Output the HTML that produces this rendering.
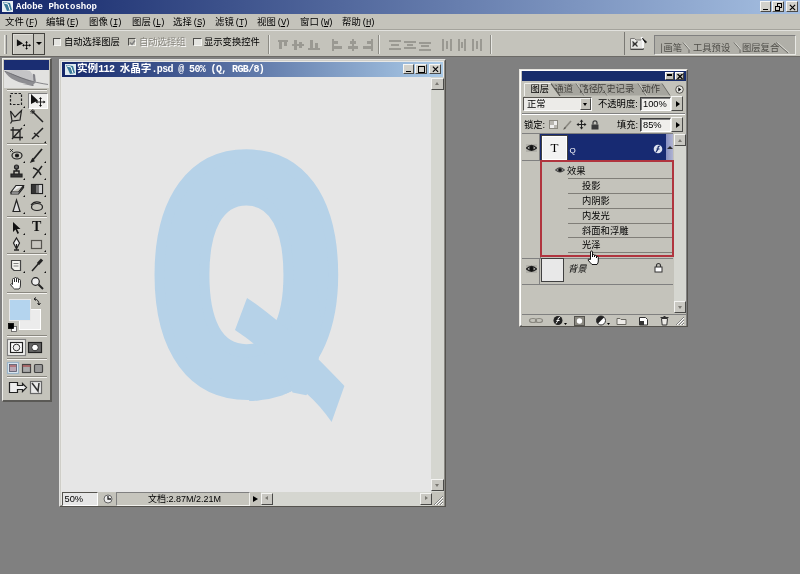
<!DOCTYPE html>
<html lang="zh-CN">
<head>
<meta charset="utf-8">
<title>Adobe Photoshop</title>
<style>
*{box-sizing:border-box;margin:0;padding:0}
html,body{width:800px;height:574px;overflow:hidden;background:#808080}
body{position:relative;font-family:"Liberation Sans","Noto Sans CJK SC","WenQuanYi Zen Hei","Noto Sans CJK JP",sans-serif;font-size:12px;color:#000;line-height:1}
#app{position:absolute;left:0;top:0;width:800px;height:574px;overflow:hidden;background:#808080;filter:blur(.4px)}
.abs{position:absolute}
u{text-decoration:underline}
/* app chrome */
#titlebar{left:0;top:0;width:800px;height:14px;background:linear-gradient(90deg,#14276a,#a5bfe1)}
#titlebar .ttl{left:16px;top:0;height:14px;line-height:14px;color:#fff;font:bold 9px/14px "Liberation Mono","DejaVu Sans Mono",monospace;letter-spacing:0;white-space:nowrap}
#menubar{left:0;top:14px;width:800px;height:17px;background:#c4c3bb}
#menubar>span{position:absolute;top:-1.500px;height:17px;line-height:17px;font-size:9.4px;white-space:nowrap}
#menubar .m{font-family:"Liberation Mono",monospace;font-size:9px;letter-spacing:-1.250px;margin-left:1px}
#optbar{left:0;top:30px;width:800px;height:27px;background:#c4c3bb;border-top:1px solid #e2e2de;border-bottom:1px solid #6c6a66;box-shadow:0 -1px 0 #a4a39c}
.wbtn{top:1px;width:11.500px;height:11px;background:#d2d1cb;border:1px solid;border-color:#f6f6f4 #4a4a48 #4a4a48 #f6f6f4}
.raised{border:1px solid;border-color:#f4f4f2 #4a4a48 #4a4a48 #f4f4f2;background:#c4c3bb}
.sunken{border:solid;border-width:1.500px 1px 1px 1.500px;border-color:#4e4d4a #f4f4f0 #f4f4f0 #4e4d4a;background:#e4e4e0}
.lbl{white-space:nowrap;font-size:9.3px}
.vsep{top:4px;width:2px;height:19px;border-left:1px solid #8c8b84;border-right:1px solid #e6e6e2}
.wtab{top:5.500px;height:13px;font-size:9.3px;line-height:12px;color:#4e4d48;white-space:nowrap}
.dtt{color:#fff;font:bold 10px/14.500px "Liberation Mono","Noto Sans CJK SC",monospace;letter-spacing:-.63px;white-space:nowrap}
.dtt .cj{font-size:10.6px;letter-spacing:0;font-family:"Liberation Mono","Noto Sans CJK SC",monospace}
.sbtrack{background:#d5d6d0}
.sbb{width:12px;height:12px;background:#c9c8c2}
.tri{position:absolute;left:3px;top:3px;width:0;height:0;border:2.5px solid transparent}
.tri.up{border-bottom:3px solid #7a7872;border-top:0;left:2.5px;top:3.5px}
.tri.dn{border-top:3px solid #7a7872;border-bottom:0;left:2.5px;top:4px}
.tri.lf{border-right:3px solid #7a7872;border-left:0;left:3px;top:2.5px}
.tri.rt{border-left:3px solid #7a7872;border-right:0;left:4px;top:2.5px}
.pbtn{width:9px;height:7.500px;background:#c4c3bb;border:1px solid;border-color:#fff #404040 #404040 #fff}
.ptab{top:1.500px;margin-left:-.5px;font-size:9.3px;line-height:12px;color:#44423e;white-space:nowrap}
.pin{width:31px;height:14px;background:#f0efec;border:1px solid;border-color:#404040 #fff #fff #404040;box-shadow:inset 1px 1px 0 #808080;font-size:9.3px;line-height:12px;padding-left:2px}
.eln{left:46px;width:105px;height:1px;background:#807e78}
.tsep{left:4px;width:40px;height:2px;border-top:1px solid #8a8880;border-bottom:1px solid #f4f3f0}
</style>
</head>
<body>
<div id="app">
<!-- TITLE BAR -->
<div id="titlebar" class="abs">
  <svg class="abs" style="left:2px;top:1px" width="11" height="11" viewBox="0 0 11 11"><rect width="11" height="11" fill="#e8f0f4"/><path d="M1 1 L8 2 L10 9 L5 10 Z" fill="#3a7a9a"/><path d="M2 2 L6 3 L8 9" stroke="#fff" stroke-width="1" fill="none"/></svg>
  <div class="abs ttl">Adobe Photoshop</div>
  <div class="abs wbtn" style="left:759.500px"><div class="abs" style="left:2.500px;top:6.500px;width:5px;height:1.500px;background:#000"></div></div>
  <div class="abs wbtn" style="left:772px"><div class="abs" style="left:3.500px;top:1px;width:5px;height:5px;border:1px solid #000;border-top-width:1.500px"></div><div class="abs" style="left:1.500px;top:3.500px;width:5px;height:5px;border:1px solid #000;border-top-width:1.500px;background:#d2d1cb"></div></div>
  <div class="abs wbtn" style="left:786px"><svg class="abs" style="left:1.500px;top:1.500px" width="7" height="7" viewBox="0 0 8 7"><path d="M1 0.5 L7 6.5 M7 0.5 L1 6.5" stroke="#000" stroke-width="1.300"/></svg></div>
</div>
<!-- MENU BAR -->
<div id="menubar" class="abs">
  <span style="left:5px">文件<span class="m">(<u>F</u>)</span></span>
  <span style="left:46px">编辑<span class="m">(<u>E</u>)</span></span>
  <span style="left:89px">图像<span class="m">(<u>I</u>)</span></span>
  <span style="left:132px">图层<span class="m">(<u>L</u>)</span></span>
  <span style="left:173px">选择<span class="m">(<u>S</u>)</span></span>
  <span style="left:215px">滤镜<span class="m">(<u>T</u>)</span></span>
  <span style="left:257px">视图<span class="m">(<u>V</u>)</span></span>
  <span style="left:300px">窗口<span class="m">(<u>W</u>)</span></span>
  <span style="left:342px">帮助<span class="m">(<u>H</u>)</span></span>
</div>
<!-- OPTIONS BAR -->
<div id="optbar" class="abs">
  <div class="abs" style="left:4px;top:4px;width:3px;height:19px;border-left:1px solid #ecece8;border-right:1px solid #808080"></div>
  <div class="abs" style="left:12px;top:1.500px;width:22px;height:22px;border:1px solid #44433f;background:#c9c8c1;box-shadow:inset 1px 1px 0 #dddcd6">
    <svg class="abs" style="left:3px;top:4px" width="15" height="12" viewBox="0 0 17 13"><path d="M1 1 L1 9 L8 6 Z" fill="#111"/><path d="M12 4 V12 M8 8 H16" stroke="#000" stroke-width="1"/><path d="M12 3 l-1.5 2 h3z M12 13 l-1.5 -2 h3z M7 8 l2 -1.5 v3z M17 8 l-2 -1.5 v3z" fill="#000"/></svg>
  </div>
  <div class="abs" style="left:33px;top:1.500px;width:11.500px;height:22px;border:1px solid #44433f;background:#c4c3bb">
    <div class="abs" style="left:2px;top:8px;width:0;height:0;border:3px solid transparent;border-top:3px solid #000;border-bottom:0"></div>
  </div>
  <div class="abs sunken" style="left:52.500px;top:6.500px;width:8.500px;height:8.500px"></div>
  <div class="abs lbl" style="left:64px;top:5px;line-height:12px">自动选择图层</div>
  <div class="abs sunken" style="left:127.500px;top:6.500px;width:8.500px;height:8.500px;background:#c4c3bb"><svg class="abs" style="left:0;top:0" width="7" height="7" viewBox="0 0 7 7"><path d="M1 3.5 L3 5.5 L6 1.5" stroke="#808080" stroke-width="1.4" fill="none"/></svg></div>
  <div class="abs lbl" style="left:139px;top:5px;line-height:12px;color:#8a8880;text-shadow:1px 1px 0 #fff">自动选择组</div>
  <div class="abs sunken" style="left:193px;top:6.500px;width:8.500px;height:8.500px"></div>
  <div class="abs lbl" style="left:204px;top:5px;line-height:12px">显示变换控件</div>
  <div class="abs vsep" style="left:268px"></div>
  <div class="abs vsep" style="left:378px"></div>
  <div class="abs vsep" style="left:490px"></div>
  <svg class="abs" style="left:276px;top:7px;filter:drop-shadow(.8px .8px 0 #e4e4e0)" width="210" height="14" viewBox="0 0 210 14" fill="#9a9992" stroke="none">
    <g id="ic"><rect x="2" y="2" width="10" height="2"/><rect x="3" y="4" width="3" height="7"/><rect x="8" y="4" width="3" height="4"/></g>
    <g transform="translate(15,0)"><rect x="1" y="6" width="12" height="2"/><rect x="3" y="2" width="3" height="10"/><rect x="8" y="4" width="3" height="6"/></g>
    <g transform="translate(31,0)"><rect x="1" y="10" width="12" height="2"/><rect x="3" y="2" width="3" height="8"/><rect x="8" y="5" width="3" height="5"/></g>
    <g transform="translate(54,0)"><rect x="2" y="1" width="2" height="12"/><rect x="4" y="3" width="4" height="3"/><rect x="4" y="8" width="8" height="3"/></g>
    <g transform="translate(70,0)"><rect x="6" y="1" width="2" height="12"/><rect x="4" y="3" width="6" height="3"/><rect x="2" y="8" width="10" height="3"/></g>
    <g transform="translate(85,0)"><rect x="10" y="1" width="2" height="12"/><rect x="6" y="3" width="4" height="3"/><rect x="2" y="8" width="8" height="3"/></g>
    <g transform="translate(112,0)"><rect x="1" y="2" width="12" height="2"/><rect x="3" y="6" width="8" height="2"/><rect x="1" y="10" width="12" height="2"/></g>
    <g transform="translate(127,0)"><rect x="1" y="3" width="12" height="2"/><rect x="4" y="6" width="6" height="2"/><rect x="1" y="9" width="12" height="2"/></g>
    <g transform="translate(142,0)"><rect x="1" y="4" width="12" height="2"/><rect x="3" y="7" width="8" height="2"/><rect x="1" y="11" width="12" height="2"/></g>
    <g transform="translate(164,0)"><rect x="2" y="1" width="2" height="12"/><rect x="6" y="3" width="2" height="8"/><rect x="10" y="1" width="2" height="12"/></g>
    <g transform="translate(179,0)"><rect x="3" y="1" width="2" height="12"/><rect x="6" y="4" width="2" height="6"/><rect x="9" y="1" width="2" height="12"/></g>
    <g transform="translate(194,0)"><rect x="2" y="1" width="2" height="12"/><rect x="6" y="3" width="2" height="8"/><rect x="10" y="1" width="2" height="12"/></g>
  </svg>
  <div class="abs" style="left:623.500px;top:1px;width:1px;height:23px;background:#7a7974"></div>
  <svg class="abs" style="left:629px;top:4px" width="19" height="17" viewBox="0 0 19 17"><path d="M1.5 3.5 h4 l1.500 1.500 h5 l1.500 -1.500 h1 v10.500 h-13z" fill="#e6e6e4" stroke="#7a7976" stroke-width="1"/><path d="M3.500 6.500 l5 5 M8.500 6.500 l-5 5 M3.500 9 h4" stroke="#333" stroke-width="1.200"/><path d="M12.500 2 l1.500 4 v7" stroke="#f8f8f8" stroke-width="2" fill="none"/><path d="M13.500 3.500 l4 3.500 l-1 .8z" fill="#111" stroke="#111" stroke-width="1"/><path d="M1.500 14.500 h13" stroke="#444" stroke-width="1"/></svg>
  <div class="abs" style="left:654px;top:4px;width:142px;height:20px;background:#b0afa8;border:1px solid;border-color:#808080 #e8e8e4 #e8e8e4 #808080">
    <svg class="abs" style="left:0;top:0" width="140" height="18" viewBox="0 0 140 18"><path d="M6.500 17 V7.500 M28 6.500 L34 13.500 V17 M79 6.500 L85 13.500 V17 M121 6.500 L133 17" stroke="#6a6964" stroke-width="1" fill="none"/><path d="M29 6.500 L35 13.500 M80 6.500 L86 13.500 M122.500 6.500 L134.500 17" stroke="#d8d8d2" stroke-width="1" fill="none"/></svg>
    <div class="abs wtab" style="left:8.500px">画笔</div>
    <div class="abs wtab" style="left:38px">工具预设</div>
    <div class="abs wtab" style="left:87px">图层复合</div>
  </div>
</div>

<!-- DOCUMENT WINDOW -->
<div id="doc" class="abs" style="left:59px;top:59px;width:387px;height:448px;background:#e8e8e6;border:1px solid;border-color:#e2e2e0 #55534e #55534e #e2e2e0">
  <div class="abs" style="left:0;top:0;width:385px;height:446px;border:1px solid;border-color:#cfcec8 #8a8984 #8a8984 #cfcec8"></div>
  <div class="abs" id="doctitle" style="left:2px;top:2px;width:381px;height:15px;background:linear-gradient(90deg,#14276a,#abcbe8)">
    <svg class="abs" style="left:3px;top:2px" width="11" height="11" viewBox="0 0 11 11"><rect width="11" height="11" fill="#dfeaf0"/><path d="M1 1 L8 2 L10 9 L5 10 Z" fill="#3a7a9a"/><path d="M2 2 L6 3 L8 9" stroke="#fff" stroke-width="1" fill="none"/></svg>
    <div class="abs dtt" style="left:15px;top:0"><span class="cj">实例</span>112 <span class="cj">水晶字</span>.psd @ 50% (Q, RGB/8)</div>
    <div class="abs wbtn" style="left:340.500px;top:2px;height:10px"><div class="abs" style="left:2.500px;top:5.500px;width:5px;height:1.500px;background:#000"></div></div>
    <div class="abs wbtn" style="left:353px;top:2px;height:10px"><div class="abs" style="left:1.500px;top:1px;width:7px;height:6.500px;border:1px solid #000;border-top-width:1.500px"></div></div>
    <div class="abs wbtn" style="left:367px;top:2px;height:10px"><svg class="abs" style="left:1.500px;top:1px" width="7" height="6.5" viewBox="0 0 8 7"><path d="M1 0.5 L7 6.5 M7 0.5 L1 6.5" stroke="#000" stroke-width="1.300"/></svg></div>
  </div>
  <!-- canvas -->
  <div class="abs" id="canvas" style="left:2px;top:17px;width:369px;height:415px;background:#e6e6e6;overflow:hidden">
    <svg class="abs" style="left:0;top:0" width="370" height="415" viewBox="61 76 370 415" fill="#b6d2e8" stroke="#b6d2e8">
      <clipPath id="cb"><polygon points="61,76 431,76 431,383 301,383 291,390 281,394.5 268,398 252,400 61,400"/></clipPath>
      <clipPath id="ct"><polygon points="240,290 279,318 279,284 336.5,284 336.5,371 360,371 360,440 331.5,423 306.5,394.5 291.5,391.5 284.5,372 256,347 228,330"/></clipPath>
      <g clip-path="url(#cb)"><text transform="matrix(0.11318 0 0 0.15347 146.9 388.2)" font-family="'DejaVu Sans','Liberation Sans',sans-serif" font-weight="bold" font-size="2048" stroke-width="87">Q</text></g>
      <g clip-path="url(#ct)"><text transform="matrix(0.17439 -0.12939 0.09666 0.23446 203.06 499.31)" font-family="IPAGothic,'DejaVu Sans',sans-serif" font-size="2048" stroke="none">Q</text></g>
    </svg>
  </div>
  <!-- v scrollbar -->
  <div class="abs sbtrack" style="left:371px;top:17px;width:13px;height:415px">
    <div class="abs raised sbb" style="left:0;top:.5px;width:12.500px"><i class="tri up"></i></div>
    <div class="abs raised sbb" style="left:0;bottom:1px;width:12.500px"><i class="tri dn"></i></div>
  </div>
  <!-- status bar -->
  <div class="abs" style="left:2px;top:432px;width:382px;height:14px;background:#c4c3bb">
    <div class="abs" style="left:0;top:0;width:36px;height:14px;background:#e6e6e6;border:1px solid;border-color:#55534e #fff #fff #55534e;font-size:9.3px;line-height:12.500px;padding-left:1.500px">50%</div>
    <svg class="abs" style="left:41px;top:2px" width="10" height="10" viewBox="0 0 10 10"><circle cx="5" cy="5" r="4" fill="#eee" stroke="#666"/><path d="M5 2 V5 H8" stroke="#222" stroke-width="1.3" fill="none"/></svg>
    <div class="abs" style="left:54px;top:0;width:134px;height:14px;background:#c6c5bd;border:1px solid;border-color:#808080 #f0f0ec #f0f0ec #808080;font-size:9px;line-height:12.500px;padding-left:31px;white-space:nowrap">文档:2.87M/2.21M</div>
    <div class="abs" style="left:191px;top:3.500px;width:0;height:0;border:3.5px solid transparent;border-left:5px solid #000;border-right:0"></div>
    <div class="abs sbtrack" style="left:198.500px;top:0;width:171.500px;height:14px">
      <div class="abs raised sbb" style="left:0;top:.5px;height:12.500px"><i class="tri lf"></i></div>
      <div class="abs raised sbb" style="right:0;top:.5px;height:12.500px"><i class="tri rt"></i></div>
    </div>
    <svg class="abs" style="left:370px;top:1px" width="12" height="13" viewBox="0 0 12 13"><path d="M11 3 L2 12 M11 6 L5 12 M11 9 L8 12" stroke="#808080" stroke-width="1"/><path d="M11 4 L3 12 M11 7 L6 12 M11 10 L9 12" stroke="#fff" stroke-width="1"/></svg>
  </div>
</div>

<!-- LAYERS PALETTE -->
<div id="layers" class="abs" style="left:519px;top:69px;width:169px;height:258px;background:#c4c3bb;border:1px solid;border-color:#e8e6e0 #55534e #55534e #e8e6e0">
  <div class="abs" style="left:0;top:0;width:167px;height:256px;border:1px solid;border-color:#fff #808080 #808080 #fff"></div>
  <div class="abs" style="left:1.500px;top:1px;width:164.500px;height:10px;background:#182d6c">
    <div class="abs pbtn" style="left:143.500px;top:1px"><div class="abs" style="left:1px;top:1px;width:5px;height:2px;background:#000"></div></div>
    <div class="abs pbtn" style="left:153px;top:1px"><svg class="abs" style="left:1px;top:1px" width="6" height="5" viewBox="0 0 6 5"><path d="M0.5 0 L5.5 5 M5.5 0 L0.5 5" stroke="#000" stroke-width="1.3"/></svg></div>
  </div>
  <!-- tabs -->
  <div class="abs" style="left:2px;top:11px;width:164px;height:15px;background:#c4c3bb;overflow:hidden">
    <svg class="abs" style="left:0;top:0" width="164" height="15" viewBox="0 0 164 15">
      <path d="M29 14.500 V2.500 H140 L148 14.500 Z" fill="#a6a59e"/>
      <path d="M54 2.500 L62 14.500 M77 2.500 L85 14.500 M116 2.500 L124 14.500 M140 2.500 L148 14.500" stroke="#6e6d68" stroke-width="1" fill="none"/>
      <path d="M55 2.500 L63 14.500 M78 2.500 L86 14.500 M117 2.500 L125 14.500" stroke="#d0cfc8" stroke-width="1" fill="none"/>
    </svg>
    <div class="abs ptab" style="left:33px">通道</div>
    <div class="abs ptab" style="left:58px">路径</div>
    <div class="abs ptab" style="left:75.500px">历史记录</div>
    <div class="abs ptab" style="left:120px">动作</div>
    <svg class="abs" style="left:0;top:0" width="164" height="15" viewBox="0 0 164 15">
      <path d="M2.500 15 V2.500 H29 L38 15 Z" fill="#c4c3bb"/>
      <path d="M2.500 15 V2.500 H29" stroke="#f0f0ec" stroke-width="1" fill="none"/>
      <path d="M29 2.500 L38 15" stroke="#55534e" stroke-width="1.200" fill="none"/>
      <path d="M62.500 14.500 L57 6 L62 6 Z M85.500 14.500 L80 6 L86 6Z" fill="#a6a59e"/>
      <circle cx="157.500" cy="8.500" r="3.800" fill="#e4e4e0" stroke="#55534e" stroke-width="1"/>
      <path d="M156.300 6.500 L159.300 8.500 L156.300 10.500 Z" fill="#000"/>
    </svg>
    <div class="abs ptab" style="left:9px;color:#000">图层</div>
  </div>
  <!-- blend row -->
  <div class="abs" style="left:3px;top:27px;width:69px;height:14px;background:#ecebe8;border:1px solid;border-color:#55534e #fff #fff #55534e;font-size:9.3px;line-height:12px;padding-left:3px">正常
    <div class="abs raised" style="right:0;top:0;width:11px;height:12px"><div class="abs" style="left:2px;top:4px;width:0;height:0;border:2.5px solid transparent;border-top:3px solid #000;border-bottom:0"></div></div>
  </div>
  <div class="abs lbl" style="left:78px;top:28px;line-height:12px">不透明度:</div>
  <div class="abs pin" style="left:120px;top:27px">100%</div>
  <div class="abs raised" style="left:150.500px;top:26px;width:12.500px;height:15px"><div class="abs" style="left:4px;top:3.500px;width:0;height:0;border:3px solid transparent;border-left:4px solid #000;border-right:0"></div></div>
  <div class="abs" style="left:2px;top:43px;width:163px;height:2px;border-top:1px solid #808080;border-bottom:1px solid #fff"></div>
  <!-- lock row -->
  <div class="abs lbl" style="left:4px;top:49px;line-height:12px">锁定:</div>
  <svg class="abs" style="left:28px;top:48px" width="54" height="13" viewBox="0 0 54 13">
    <rect x="1.5" y="2.5" width="8" height="8" fill="#eee" stroke="#8a8880"/><path d="M2 3h4v4h-4z M6 7h3v3h-3z" fill="#b8b6b0"/>
    <path d="M16 11 L23 3" stroke="#8a8880" stroke-width="1.6"/><path d="M15 12 l2 -3 l1 1z" fill="#55534e"/>
    <path d="M33.5 2.5 V10.5 M29.5 6.5 H37.5" stroke="#222" stroke-width="1"/><path d="M33.5 1.5 l-1.800 2.200 h3.600z M33.5 11.5 l-1.800 -2.200 h3.600z M28.5 6.5 l2.200 -1.800 v3.600z M38.5 6.5 l-2.200 -1.800 v3.600z" fill="#222"/>
    <rect x="43.5" y="6.5" width="7" height="5" fill="#3a3a3a"/><path d="M45 6.5 V4.800 a2 2 0 0 1 4 0 V6.5" stroke="#3a3a3a" stroke-width="1.200" fill="none"/>
  </svg>
  <div class="abs lbl" style="left:97px;top:49px;line-height:12px">填充:</div>
  <div class="abs pin" style="left:120px;top:48px">85%</div>
  <div class="abs raised" style="left:150.500px;top:47px;width:12.500px;height:15px"><div class="abs" style="left:4px;top:3.500px;width:0;height:0;border:3px solid transparent;border-left:4px solid #000;border-right:0"></div></div>
  <!-- layer list -->
  <div class="abs" id="llist" style="left:2px;top:62.500px;width:151px;height:181px;background:#c4c3bb;border-top:1px solid #808080">
    <!-- Q layer -->
    <div class="abs" style="left:0;top:0;width:18px;height:27px;border-right:1px solid #808080;border-bottom:1px solid #808080"></div>
    <div class="abs" style="left:18px;top:0;width:133px;height:27px;background:#172a72"></div>
    <div class="abs" style="left:143.500px;top:0;width:7.500px;height:27px;background:linear-gradient(90deg,#8890c0,#b0b4d2)"></div>
    <div class="abs" style="left:19px;top:1px;width:27px;height:26px;background:#f2f2f2;border:1px solid #404040;box-shadow:inset 0 0 0 1px #fff;font:13px/23px 'Liberation Serif',serif;text-align:center;color:#000">T</div>
    <div class="abs" style="left:47.500px;top:12px;font:8px/10px 'Liberation Sans',sans-serif;color:#fff">Q</div>
    <svg class="abs" style="left:131px;top:10px" width="10" height="10" viewBox="0 0 10 10"><circle cx="5" cy="5" r="4.3" fill="#dfe3f0"/><path d="M3 8 Q5 6 5 4 Q5 2 7 2 M3.5 5 H6.5" stroke="#172b69" stroke-width="1.2" fill="none"/></svg>
    <div class="abs" style="left:144.500px;top:12px;width:0;height:0;border:3px solid transparent;border-bottom:3.500px solid #2a2a30;border-top:0"></div>
    <svg class="abs eye" style="left:4px;top:10px" width="11" height="8" viewBox="0 0 11 8"><rect x="-1" y="-1" width="13" height="10" fill="#b2b1aa"/><path d="M0.500 4 Q5.500 -1 10.500 4 Q5.500 8.500 0.500 4Z" fill="#e0e0dc" stroke="#222" stroke-width="1.300"/><circle cx="5.500" cy="4" r="2.300" fill="#111"/></svg>
    <!-- effects -->
    <svg class="abs eye" style="left:33px;top:32px" width="10" height="8" viewBox="0 0 11 8"><path d="M0.500 4 Q5.500 -1 10.500 4 Q5.500 8.500 0.500 4Z" fill="#888" stroke="#333" stroke-width="1"/><circle cx="5.500" cy="4" r="2" fill="#111"/></svg>
    <div class="abs lbl" style="left:45px;top:31px;line-height:12px">效果</div>
    <div class="abs lbl" style="left:60px;top:46px;line-height:12px">投影</div>
    <div class="abs lbl" style="left:60px;top:61px;line-height:12px">内阴影</div>
    <div class="abs lbl" style="left:60px;top:76px;line-height:12px">内发光</div>
    <div class="abs lbl" style="left:60px;top:91px;line-height:12px">斜面和浮雕</div>
    <div class="abs lbl" style="left:60px;top:105px;line-height:12px">光泽</div>
    <div class="abs eln" style="top:44.3px"></div>
    <div class="abs eln" style="top:59.3px"></div>
    <div class="abs eln" style="top:74.3px"></div>
    <div class="abs eln" style="top:89.3px"></div>
    <div class="abs eln" style="top:103.3px"></div>
    <div class="abs eln" style="top:118.3px"></div>
    <div class="abs" style="left:18px;top:27px;width:1px;height:98px;background:#808080"></div>
    <div class="abs" style="left:0;top:124px;width:151px;height:1px;background:#808080"></div>
    <!-- red highlight -->
    <div class="abs" style="left:17.900px;top:26.800px;width:134.500px;height:97px;border:2px solid #b0343e;z-index:3"></div>
    <!-- background layer -->
    <div class="abs" style="left:0;top:124px;width:18px;height:27px;border-right:1px solid #808080"></div>
    <svg class="abs eye" style="left:4px;top:131px" width="11" height="8" viewBox="0 0 11 8"><rect x="-1" y="-1" width="13" height="10" fill="#b2b1aa"/><path d="M0.500 4 Q5.500 -1 10.500 4 Q5.500 8.500 0.500 4Z" fill="#e0e0dc" stroke="#222" stroke-width="1.300"/><circle cx="5.500" cy="4" r="2.300" fill="#111"/></svg>
    <div class="abs" style="left:19px;top:124px;width:23px;height:24px;background:#e8e8e8;border:1px solid #404040"></div>
    <div class="abs lbl" style="left:46px;top:129.500px;line-height:12px;font-style:italic">背景</div>
    <svg class="abs" style="left:132px;top:128.500px" width="9" height="11" viewBox="0 0 9 11"><rect x="1" y="5" width="7" height="5" fill="#fff" stroke="#333"/><path d="M2.500 5 V3.500 a2 2 0 0 1 4 0 V5" stroke="#333" stroke-width="1.200" fill="none"/></svg>
    <div class="abs" style="left:0;top:150.500px;width:151px;height:1px;background:#808080"></div>
    <!-- cursor hand -->
    <svg class="abs" style="left:65px;top:116.500px;z-index:5" width="12" height="16" viewBox="0 0 12 16"><path d="M3.500 8 V2 a1 1 0 0 1 2 0 V7 V5.500 a1 1 0 0 1 2 0 V7 V6.300 a1 1 0 0 1 2 0 V8 V7.300 a0.900 0.900 0 0 1 1.800 0 V11 Q11.300 13 10 14.500 H5 Q3 12.500 1 10 Q0.800 8.500 3.500 9.500Z" fill="#fff" stroke="#000" stroke-width="0.900"/></svg>
  </div>
  <!-- scrollbar -->
  <div class="abs sbtrack" style="left:154px;top:64px;width:12px;height:179px">
    <div class="abs raised sbb" style="left:0;top:0;width:12px;height:12px"><i class="tri up" style="left:2.500px;top:3.500px"></i></div>
    <div class="abs raised sbb" style="left:0;bottom:0;width:12px;height:12px"><i class="tri dn" style="left:2.500px;top:4px"></i></div>
  </div>
  <!-- bottom bar -->
  <div class="abs" style="left:2px;top:244px;width:164px;height:12px;background:#c4c3bb;border-top:1px solid #808080">
    <svg class="abs" style="left:-1.500px;top:0" width="164" height="11" viewBox="0 0 164 11">
      <g fill="none" stroke="#8a8880" stroke-width="1.200"><ellipse cx="12" cy="5.500" rx="3.500" ry="2"/><ellipse cx="18" cy="5.500" rx="3.500" ry="2"/></g>
      <circle cx="37" cy="5.500" r="4.500" fill="#222"/><path d="M35 8.500 Q37 6 37 4.500 Q37 2.500 39 2.500 M35.500 5.500 H38.500" stroke="#fff" stroke-width="1" fill="none"/>
      <path d="M43 8 h3 l-1.500 2z" fill="#000"/>
      <rect x="53.500" y="1.500" width="10" height="9" fill="#8a8880" stroke="#55534e"/><circle cx="58.500" cy="6" r="2.700" fill="#fff"/>
      <circle cx="80" cy="5.500" r="4.500" fill="#fff" stroke="#333"/><path d="M76.800 8.700 A4.500 4.500 0 0 1 83.200 2.300 Z" fill="#222"/>
      <path d="M86 8 h3 l-1.500 2z" fill="#000"/>
      <path d="M96 3.500 h3 l1 1 h5 v5 h-9z" fill="#eceae6" stroke="#6a6862"/>
      <path d="M118.500 2.500 h6 l2 2 v5.500 h-8z" fill="#fff" stroke="#333"/><rect x="119" y="6" width="4" height="4" fill="#333"/>
      <path d="M140.500 3.500 h6 l-0.700 6.500 h-4.600z" fill="#eceae6" stroke="#333"/><path d="M139.500 2.500 h8 M142.500 1.500 h2" stroke="#333"/>
      <path d="M163 2 L155 10 M163 5 L158 10 M163 8 L161 10" stroke="#808080"/><path d="M163 3 L156 10 M163 6 L159 10 M163 9 L162 10" stroke="#fff"/>
    </svg>
  </div>
</div>

<!-- TOOLBOX -->
<div id="toolbox" class="abs" style="left:2px;top:58px;width:50px;height:344px;background:#c4c3bb;border:solid;border-width:1px 2px 2px 1px;border-color:#f0f0ec #5a5955 #5a5955 #f0f0ec">
  <div class="abs" style="left:1px;top:1px;width:45px;height:10px;background:#1a2d72"></div>
  <div class="abs" style="left:1px;top:11px;width:45px;height:18px;background:#e2e2e0;overflow:hidden">
    <svg class="abs" style="left:0;top:0" width="45" height="18" viewBox="53 187 600 240" preserveAspectRatio="none">
      <path d="M60 200 C 200 178 350 186 400 200 C 440 250 462 300 472 352 C 330 315 190 255 60 200 Z" fill="#c4c4c6"/>
      <path d="M60 205 C 110 300 250 372 440 388 L 472 352 C 330 312 200 252 60 205 Z" fill="#8e8e92"/>
      <path d="M438 236 L 446 330 L 478 345 L 466 246 Z" fill="#808086"/>
      <path d="M60 203 C 200 250 330 335 640 380" stroke="#58585e" stroke-width="9" fill="none"/>
      <path d="M300 375 L 450 400 L 440 385 Z" fill="#6a6a70"/>
    </svg>
  </div>
  <div class="abs tsep" style="top:29.500px"></div>
  <!-- selected move tool bg -->
  <div class="abs" style="left:25px;top:34px;width:20px;height:16px;background:#f0f0ee;border:1px solid;border-color:#808080 #fff #fff #808080"></div>
  <svg class="abs" style="left:0;top:0" width="47" height="341" viewBox="3 59 47 341" fill="none" stroke="#222" stroke-width="1.200">
    <!-- row1 marquee / move -->
    <rect x="10.500" y="93.500" width="11" height="11" stroke-dasharray="2.500 1.500"/>
    <path d="M31 94 V104 L38 100.500Z" fill="#111" stroke="none"/><path d="M40.500 98 V106 M36.500 102 H44.500" stroke-width="1"/><path d="M40.500 97 l-1.500 2 h3z M40.500 107 l-1.500 -2 h3z M35.500 102 l2 -1.500 v3z M45.500 102 l-2 -1.500 v3z" fill="#111" stroke="none"/>
    <!-- row2 lasso / wand -->
    <path d="M10.500 111 L15 117 L21.500 110.500 L20 120 L12 121 Z M12 121 L10.500 123.500"/>
    <path d="M33 112 L43 122" stroke-width="1.500"/><path d="M31 110 l3.500 3.500 M34.500 110 l-3.500 3.500 M32.800 109 v5 M30 111.700 h5" stroke-width="0.800"/>
    <!-- row3 crop / slice -->
    <path d="M13 127 V137.500 H23 M10.500 130 H20 V140.500 M12 139 L22 128" stroke-width="1.300"/>
    <path d="M32 139 L43 128 M34 133 l5 4" stroke-width="1.500"/>
    <!-- row4 heal / brush -->
    <ellipse cx="17" cy="155.500" rx="5" ry="3.500"/><circle cx="17" cy="155.500" r="1.500" fill="#111"/><path d="M10 149 l3 3 M13 149 l-3 3" stroke-width="0.800"/>
    <path d="M32 161 L42 149" stroke-width="1.800"/><path d="M31 162 l3 -1 l-1.500 -2z" fill="#111"/>
    <!-- row5 stamp / history brush -->
    <path d="M11 177 H22 V174 H11 Z" fill="#333"/><path d="M14 174 V171 H19 V174 M16.500 171 V168" stroke-width="1.500"/><circle cx="16.500" cy="167" r="2" fill="#666"/>
    <path d="M33 178 L42 166 M33 168 q5 1 8 7" stroke-width="1.500"/>
    <!-- row6 eraser / gradient -->
    <path d="M11 192 L16 185.500 H23.500 L18.500 192 Z M11 192 v2 h7.500 l5 -6.500 v-2" fill="#eee"/>
    <rect x="31.500" y="184.500" width="11" height="9" fill="#777"/><rect x="32" y="185" width="4" height="8" fill="#333" stroke="none"/><rect x="39" y="185" width="3" height="8" fill="#ccc" stroke="none"/>
    <!-- row7 blur / dodge -->
    <path d="M16.500 200 L20 211.500 H13 Z" fill="#ddd"/>
    <ellipse cx="37" cy="207" rx="5.500" ry="3.500"/><path d="M31 205 q4 -5 10 -2" />
    <!-- row8 path select / type -->
    <path d="M13 222 V232 L15.500 229.500 L17.500 234 L19 233 L17 229 H20.500 Z" fill="#111" stroke="none"/>
    <!-- row9 pen / shape -->
    <path d="M16.500 238 l3 5 l-3 6 l-3 -6z M16.500 244 v5" fill="#eee"/><path d="M14 250 h5" stroke-width="1.500"/>
    <rect x="31.500" y="240.500" width="10" height="8" fill="#c8c6c0" stroke="#55534e"/>
    <!-- row10 notes / eyedropper -->
    <path d="M11.500 260.500 H20.500 V270.500 H14 L11.500 268 Z" fill="#f4f4f0" stroke="#444"/><path d="M13.500 263.500 h5 M13.500 266 h5" stroke-width="0.800" stroke="#666"/>
    <path d="M32 271 L39 263" stroke-width="1.500"/><path d="M38 264 L42 259.500" stroke-width="3"/>
    <!-- row11 hand / zoom -->
    <path d="M12.500 283 V279.500 a1 1 0 0 1 2 0 V282 V278.500 a1 1 0 0 1 2 0 V282 V279 a1 1 0 0 1 2 0 V282.500 V280.500 a1 1 0 0 1 2 0 V285 Q20.500 288 19 289 H14.500 Q12 287 10.500 284.500 Q11 283 12.500 284.500Z" fill="#fff" stroke="#222" stroke-width="0.900"/>
    <circle cx="35.500" cy="281.500" r="3.800" fill="#eee"/><path d="M38.500 284.500 L43 289" stroke-width="2"/>
    <!-- submenu arrows -->
    <g fill="#111" stroke="none">
      <path d="M25 108 l0 -2 l-2 2z M25 126 l0 -2 l-2 2z M46 143 l0 -2 l-2 2z M25 163 l0 -2 l-2 2z M46 163 l0 -2 l-2 2z M25 180 l0 -2 l-2 2z M46 180 l0 -2 l-2 2z M25 197 l0 -2 l-2 2z M46 197 l0 -2 l-2 2z M25 214 l0 -2 l-2 2z M46 214 l0 -2 l-2 2z M25 235 l0 -2 l-2 2z M46 235 l0 -2 l-2 2z M25 252 l0 -2 l-2 2z M46 252 l0 -2 l-2 2z M25 273 l0 -2 l-2 2z M46 273 l0 -2 l-2 2z"/>
    </g>
    <!-- colour swatches -->
    <rect x="19.500" y="309.500" width="21" height="20" fill="#ececec" stroke="#fff" stroke-width="1"/>
    <rect x="9.500" y="299.500" width="21" height="21" fill="#b4d4ee" stroke="#e8e8e8" stroke-width="1"/>
    <rect x="11.500" y="326.500" width="5" height="5" fill="#fff" stroke="#555" stroke-width="0.800"/><rect x="8.500" y="323.500" width="5" height="5" fill="#000" stroke="#000" stroke-width="0.800"/>
    <path d="M34 299 q5 0 5 6 M34 299 l2 -1.500 M34 299 l2 1.500 M39 305 l-1.500 -2 M39 305 l1.500 -2" stroke-width="1"/>
    <!-- quick mask -->
    <rect x="7.500" y="339.500" width="18" height="16" fill="#f4f4f2" stroke="#808080"/>
    <rect x="10.500" y="342.500" width="12" height="10" fill="#fff" stroke="#222"/><circle cx="16.500" cy="347.500" r="3.300" fill="#eee" stroke="#222" stroke-width="0.900"/>
    <rect x="28.500" y="342.500" width="13" height="10" fill="#666" stroke="#222"/><circle cx="35" cy="347.500" r="3.300" fill="#fff" stroke="#222" stroke-width="0.900"/>
    <!-- screen modes -->
    <rect x="7.500" y="362.500" width="11" height="11" fill="#dfe9f2" stroke="#9ab4c8"/><rect x="9.500" y="364.500" width="7" height="7" fill="#b9a7b4" stroke="#556" stroke-width="0.800"/><path d="M10 366 h6" stroke="#a44" stroke-width="1"/>
    <rect x="22.500" y="364.500" width="8" height="8" fill="#aaa" stroke="#444"/><path d="M22.500 366 h8" stroke="#a44"/>
    <rect x="34.500" y="364.500" width="8" height="8" rx="1" fill="#999" stroke="#444"/>
    <!-- jump -->
    <path d="M9.500 382.500 h8 v3 h5 v-2 l4 4 l-4 4 v-2 h-5 v3 h-8z" fill="#eee" stroke="#222"/><rect x="30.500" y="381.500" width="11" height="12" fill="#e8e8e8" stroke="#666"/><path d="M32 383 l6 8 l1 -8" stroke="#333" stroke-width="1.500"/>
  </svg>
  <div class="abs" style="left:29px;top:161px;font:bold 14px/14px 'Liberation Serif',serif;color:#111">T</div>
  <div class="abs tsep" style="top:83.500px"></div>
  <div class="abs tsep" style="top:156.500px"></div>
  <div class="abs tsep" style="top:194px"></div>
  <div class="abs tsep" style="top:232.500px"></div>
  <div class="abs tsep" style="top:276px"></div>
  <div class="abs tsep" style="top:299px"></div>
  <div class="abs tsep" style="top:317px"></div>
</div>
</div>
</body>
</html>
